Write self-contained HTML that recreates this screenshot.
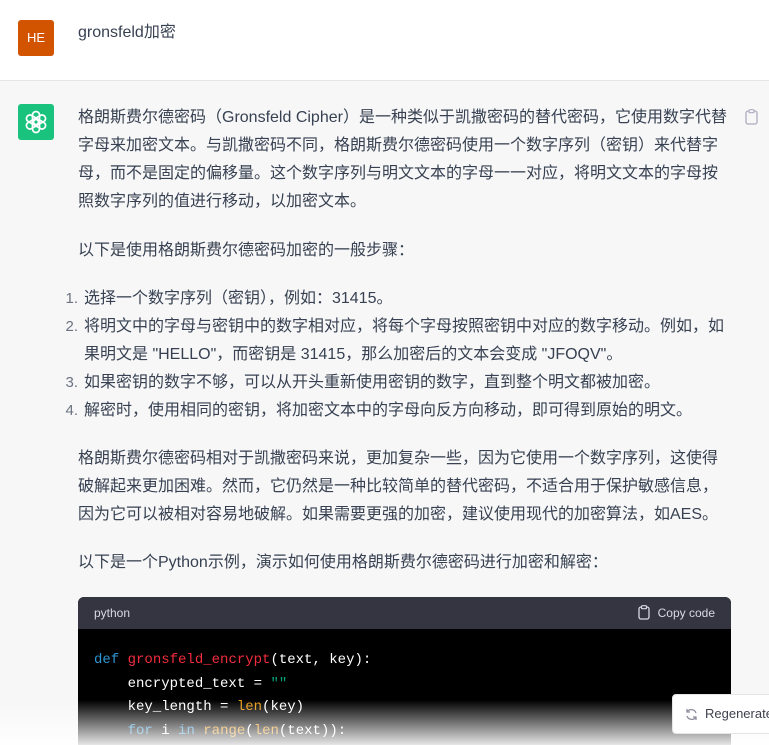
<!DOCTYPE html>
<html><head><meta charset="utf-8"><style>
*{margin:0;padding:0;box-sizing:border-box}
html{width:769px;height:745px;overflow:hidden}
body{width:769px;height:745px;overflow:hidden;background:#f7f7f8;font-family:"Liberation Sans","Noto Sans CJK SC",sans-serif;color:#374151;font-size:16px;position:relative}
.top{position:absolute;left:0;top:0;width:769px;height:81px;background:#fff;border-bottom:1px solid #e5e5e5}
.he{position:absolute;left:18px;top:20px;width:36px;height:36px;background:#d35400;border-radius:3px;color:#fff;font-size:13px;line-height:36px;text-align:center}
.q{position:absolute;left:78px;top:21px;font-size:16px;line-height:24px}
.gpt{position:absolute;left:18px;top:104px;width:36px;height:36px;background:#19c37d;border-radius:3px}
.t{position:absolute;left:78px;white-space:nowrap;line-height:28px}
.n{position:absolute;left:62px;width:16px;text-align:right;color:#6b7280;line-height:28px;font-size:15px}
.li{position:absolute;left:84px;white-space:nowrap;line-height:28px}
.code{position:absolute;left:78px;top:597px;width:653px;height:160px;background:#000;border-radius:6px;overflow:hidden}
.ch{height:32px;background:#343541;color:#d9d9e3;font-size:12px;line-height:32px;padding:0 16px;position:relative}
.cc{position:absolute;right:16px;top:0}
pre{font-family:"Liberation Mono",monospace;font-size:14px;line-height:23.7px;color:#fff;padding:20px 16px}
.k{color:#2e95d3}.f{color:#f22c3d}.s{color:#00a67d}.b{color:#e9950c}
.fade{position:absolute;left:0;top:700px;width:769px;height:45px;background:linear-gradient(rgba(255,255,255,0),rgba(255,255,255,.9))}
.regen{position:absolute;left:672px;top:694px;width:110px;height:40px;background:#fff;border:1px solid #e5e5e5;border-radius:4px;font-size:13px;line-height:38px;padding-left:32px;color:#40414f;white-space:nowrap;overflow:hidden}
</style></head><body>
<div class="top"><div class="he">HE</div><div class="q">gronsfeld加密</div></div>
<div class="gpt"><svg width="36" height="36" viewBox="0 0 36 36"><g fill="none" stroke="#fff" stroke-width="1.7" transform="translate(18 18)"><rect id="p" x="-3.5" y="-10.5" width="7" height="13" rx="3.5"/><use href="#p" transform="rotate(60)"/><use href="#p" transform="rotate(120)"/><use href="#p" transform="rotate(180)"/><use href="#p" transform="rotate(240)"/><use href="#p" transform="rotate(300)"/></g></svg></div>
<svg style="position:absolute;left:745px;top:109px" width="13" height="16" viewBox="0 0 13 16"><rect x="1" y="2" width="11" height="13" rx="2" fill="none" stroke="#acacbe" stroke-width="1.3"/><rect x="4" y="0.7" width="5" height="3" rx="1" fill="#f7f7f8" stroke="#acacbe" stroke-width="1.2"/></svg>
<div class="t" style="top:104px">格朗斯费尔德密码（Gronsfeld Cipher）是一种类似于凯撒密码的替代密码，它使用数字代替<br>字母来加密文本。与凯撒密码不同，格朗斯费尔德密码使用一个数字序列（密钥）来代替字<br>母，而不是固定的偏移量。这个数字序列与明文文本的字母一一对应，将明文文本的字母按<br>照数字序列的值进行移动，以加密文本。</div>
<div class="t" style="top:237px">以下是使用格朗斯费尔德密码加密的一般步骤：</div>
<div class="n" style="top:285px">1.</div><div class="li" style="top:285px">选择一个数字序列（密钥），例如：31415。</div>
<div class="n" style="top:313px">2.</div><div class="li" style="top:313px">将明文中的字母与密钥中的数字相对应，将每个字母按照密钥中对应的数字移动。例如，如<br>果明文是 "HELLO"，而密钥是 31415，那么加密后的文本会变成 "JFOQV"。</div>
<div class="n" style="top:369px">3.</div><div class="li" style="top:369px">如果密钥的数字不够，可以从开头重新使用密钥的数字，直到整个明文都被加密。</div>
<div class="n" style="top:397px">4.</div><div class="li" style="top:397px">解密时，使用相同的密钥，将加密文本中的字母向反方向移动，即可得到原始的明文。</div>
<div class="t" style="top:445px">格朗斯费尔德密码相对于凯撒密码来说，更加复杂一些，因为它使用一个数字序列，这使得<br>破解起来更加困难。然而，它仍然是一种比较简单的替代密码，不适合用于保护敏感信息，<br>因为它可以被相对容易地破解。如果需要更强的加密，建议使用现代的加密算法，如AES。</div>
<div class="t" style="top:549px">以下是一个Python示例，演示如何使用格朗斯费尔德密码进行加密和解密：</div>
<div class="code"><div class="ch">python<span class="cc"><svg width="12" height="15" viewBox="0 0 12 15" style="vertical-align:-3px;margin-right:8px"><rect x="1" y="2" width="10" height="12" rx="2" fill="none" stroke="#d9d9e3" stroke-width="1.3"/><rect x="3.5" y="0.7" width="5" height="3" rx="1" fill="#343541" stroke="#d9d9e3" stroke-width="1.2"/></svg>Copy code</span></div>
<pre><span class="k">def</span> <span class="f">gronsfeld_encrypt</span>(text, key):
    encrypted_text = <span class="s">""</span>
    key_length = <span class="b">len</span>(key)
    <span class="k">for</span> i <span class="k">in</span> <span class="b">range</span>(<span class="b">len</span>(text)):</pre></div>
<div class="fade"></div>
<div class="regen"><svg style="position:absolute;left:12px;top:13px" width="13" height="13" viewBox="0 0 13 13"><path d="M11 5A5 5 0 0 0 2 4M2 1v3h3M2 8a5 5 0 0 0 9 1M11 12V9H8" fill="none" stroke="#8e8ea0" stroke-width="1.3"/></svg>Regenerate response</div>
</body></html>
